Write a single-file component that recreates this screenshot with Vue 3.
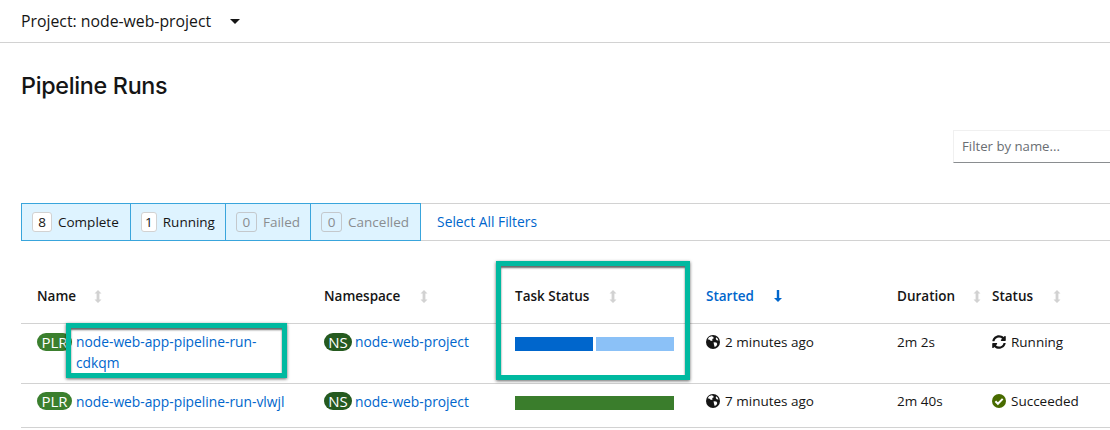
<script setup>
const columns = [
  { label: 'Name', gap: 18 },
  { label: 'Namespace', gap: 20 },
  { label: 'Task Status', gap: 20 },
  { label: 'Started', active: true, gap: 20 },
  { label: 'Duration', gap: 18 },
  { label: 'Status', gap: 20 },
]
const filters = [
  { count: 8, label: 'Complete', w: 20 },
  { count: 1, label: 'Running', w: 16 },
  { count: 0, label: 'Failed', off: true, w: 21 },
  { count: 0, label: 'Cancelled', off: true, w: 21 },
]
const rows = [
  { name: 'node-web-app-pipeline-run-cdkqm', tall: true, bars: ['blue', 'light'], started: '2 minutes ago', duration: '2m 2s', status: 'Running' },
  { name: 'node-web-app-pipeline-run-vlwjl', bars: ['green'], started: '7 minutes ago', duration: '2m 40s', status: 'Succeeded' },
]
</script>

<template>
  <div class="page">
    <header class="project">
      <span>Project: node-web-project</span>
      <span class="caret"></span>
    </header>
    <h1>Pipeline Runs</h1>
    <div class="search-row">
      <input class="search" placeholder="Filter by name..." />
    </div>
    <div class="filters">
      <div v-for="f in filters" :key="f.label" class="chip" :class="{ off: f.off }">
        <span class="count" :style="{ width: f.w + 'px' }">{{ f.count }}</span>
        <span>{{ f.label }}</span>
      </div>
      <a class="select-all">Select All Filters</a>
    </div>
    <div class="table">
      <div class="row head">
        <div v-for="c in columns" :key="c.label" class="cell hcell" :class="{ active: c.active }" :style="{ gap: c.gap + 'px' }">
          <span>{{ c.label }}</span>
          <svg v-if="c.active" class="sort" width="8" height="12" viewBox="0 0 8 12"><path d="M2.800 0h2.400v8H8L4 12 0 8h2.800z" fill="#06c"/></svg>
          <svg v-else class="sort" width="8" height="13" viewBox="0 0 8 13"><path d="M4 0l3.500 3.500H5.400v6h2.100L4 13 .5 9.500h2.100v-6H.5z" fill="#d2d2d2"/></svg>
        </div>
      </div>
      <div v-for="r in rows" :key="r.name" class="row" :class="r.tall ? 'tall' : 'short'">
        <div class="cell res namecell">
          <span class="badge plr">PLR</span>
          <a class="link">{{ r.name }}</a>
        </div>
        <div class="cell res">
          <span class="badge ns">NS</span>
          <a class="link">node-web-project</a>
        </div>
        <div class="cell barcell">
          <div class="bars">
            <i v-for="(b, i) in r.bars" :key="i" :class="b"></i>
          </div>
        </div>
        <div class="cell">
          <svg class="ico" width="14" height="14" viewBox="0 0 14 14">
            <circle cx="7" cy="7" r="7" fill="#151515"/>
            <path d="M3 2.200l2.600-.9 1.800.6.2 1.600-1.400.6.4 1.400-1.600.4-1.400-1.200-1.900-.4zM7.600 7.200l2.700.3 1 1.400-.9 2-1.700 1.200-.7-2.300zM10 2.200l1.600 1.400.9 2-1.700-.3-1-1.400z" fill="#fff"/>
          </svg>
          <span>{{ r.started }}</span>
        </div>
        <div class="cell">{{ r.duration }}</div>
        <div class="cell">
          <svg v-if="r.status === 'Running'" class="ico" width="14" height="14" viewBox="0 0 512 512">
            <path fill="#151515" d="M370.700 133.300C339.500 104 298.900 88 255.800 88c-77.500.1-144.300 53.200-162.800 126.900-1.300 5.400-6.100 9.200-11.700 9.200H24.100c-7.500 0-13.200-6.800-11.800-14.200C33.900 94.900 134.800 8 256 8c66.400 0 126.800 26.100 171.300 68.700L463 41C478.100 25.900 504 36.600 504 57.900V192c0 13.300-10.700 24-24 24H345.900c-21.400 0-32.100-25.900-17-41zM32 296h134.100c21.400 0 32.100 25.900 17 41l-41.800 41.800c31.300 29.300 71.800 45.300 114.900 45.200 77.400-.1 144.300-53.100 162.800-126.800 1.300-5.400 6.100-9.200 11.700-9.200h57.300c7.500 0 13.200 6.800 11.800 14.200C478.100 417.100 377.200 504 256 504c-66.400 0-126.800-26.100-171.300-68.700L49 471c-15.100 15.100-41 4.400-41-17V320c0-13.300 10.700-24 24-24z"/>
          </svg>
          <svg v-else class="ico" width="14" height="14" viewBox="0 0 14 14">
            <circle cx="7" cy="7" r="7" fill="#486b00"/>
            <path d="M3.400 7.300l2.500 2.500 4.800-4.900" fill="none" stroke="#fff" stroke-width="2"/>
          </svg>
          <span>{{ r.status }}</span>
        </div>
      </div>
    </div>
    <div class="mark mark-name"></div>
    <div class="mark mark-task"></div>
  </div>
</template>

<style scoped>
.page {
  position: relative;
  width: 1110px;
  height: 430px;
  overflow: hidden;
  background: #fff;
  color: #151515;
  font-family: "Open Sans", "Noto Sans", sans-serif;
  font-size: 13.500px;
}
.project {
  border-bottom: 1px solid #d2d2d2;
  padding: 0 0 1px 21px;
  height: 41px;
  display: flex;
  align-items: center;
  gap: 19px;
  font-size: 15.800px;
}
.caret {
  width: 0;
  height: 0;
  border-left: 5px solid transparent;
  border-right: 5px solid transparent;
  border-top: 5px solid #151515;
  margin-top: 2px;
}
h1 {
  margin: 0;
  padding: 29px 0 0 21px;
  height: 57px;
  box-sizing: border-box;
  font-family: Inter, sans-serif;
  font-size: 23.300px;
  font-weight: 500;
  line-height: 28px;
  letter-spacing: -0.3px;
}
.search-row {
  display: flex;
  justify-content: flex-end;
  padding-top: 30px;
}
.search {
  width: 157px;
  height: 33px;
  box-sizing: border-box;
  border: 1px solid #f0f0f0;
  border-bottom-color: #8a8d90;
  border-right: 0;
  outline: 0;
  padding: 0 8px 2px;
  font: inherit;
  font-size: 13.200px;
}
.search::placeholder { color: #6a6e73; opacity: 1; }
.filters {
  display: flex;
  align-items: stretch;
  margin: 40px 0 0 21px;
  height: 36px;
  border-top: 1px solid #d2d2d2;
  border-bottom: 1px solid #d2d2d2;
}
.chip {
  display: flex;
  align-items: center;
  gap: 6px;
  padding: 0 10px;
  margin: -1px 0;
  background: #def3ff;
  border: 1px solid #39a5dc;
  border-left-width: 0;
}
.chip:first-child { border-left-width: 1px; padding-right: 11px; }
.chip:nth-child(4) { padding-right: 11px; }
.count {
  box-sizing: border-box;
  height: 20px;
  line-height: 18px;
  text-align: center;
  background: #fff;
  border: 1px solid #d2d2d2;
  border-radius: 3px;
}
.off { color: #8a8d90; }
.off .count { background: transparent; border-color: #c4c8cc; }
.select-all {
  align-self: center;
  margin: -2px 0 0 16px;
  font-size: 13.800px;
  color: #06c;
}
.table { margin: 46px 0 0 21px; }
.row {
  display: grid;
  grid-template-columns: 287px 191px 191px 191px 95px 1fr;
  border-bottom: 1px solid #d2d2d2;
}
.head { height: 36px; align-items: start; }
.cell {
  padding: 9px 8px 0 16px;
  line-height: 18px;
  min-width: 0;
  white-space: nowrap;
}
.head .cell { padding-top: 0; }
.hcell {
  font-weight: 600;
  display: flex;
  align-items: center;
  height: 18px;
}
.hcell.active { color: #06c; }
.sort { flex-shrink: 0; }
.tall { height: 59px; }
.short { height: 43px; }
.short .cell { padding-top: 8px; }
.res {
  display: flex;
  align-items: flex-start;
  white-space: normal;
}
.namecell { padding-right: 20px; }
.badge {
  flex-shrink: 0;
  height: 18px;
  line-height: 18px;
  margin-right: 4px;
  border-radius: 9px;
  color: #fff;
  text-align: center;
  font-size: 15px;
}
.plr { background: #3b7f2e; width: 35px; }
.ns { background: #255a1f; width: 28px; margin-right: 3px; }
.link { color: #06c; font-size: 13.800px; line-height: 21px; margin-top: -2px; }
.short .link { margin-top: -1px; }
.tall .barcell { padding-top: 13px; }
.short .barcell { padding-top: 12px; }
.bars { display: flex; gap: 3px; width: 159px; height: 14px; }
.bars i { flex: 1; display: block; }
.blue { background: #06c; }
.light { background: #8bc1f7; }
.green { background: #3a7d2c; }
.ico { vertical-align: -2px; margin-right: 5px; }
.mark {
  position: absolute;
  box-sizing: border-box;
  border: 5px solid #00b9a0;
  box-shadow: 0 1px 3px rgba(0, 0, 0, .6), inset 0 2px 2px rgba(0, 0, 0, .6);
}
.mark-name { left: 66px; top: 323px; width: 221px; height: 55px; }
.mark-task { left: 496px; top: 261px; width: 194px; height: 119px; }
</style>
